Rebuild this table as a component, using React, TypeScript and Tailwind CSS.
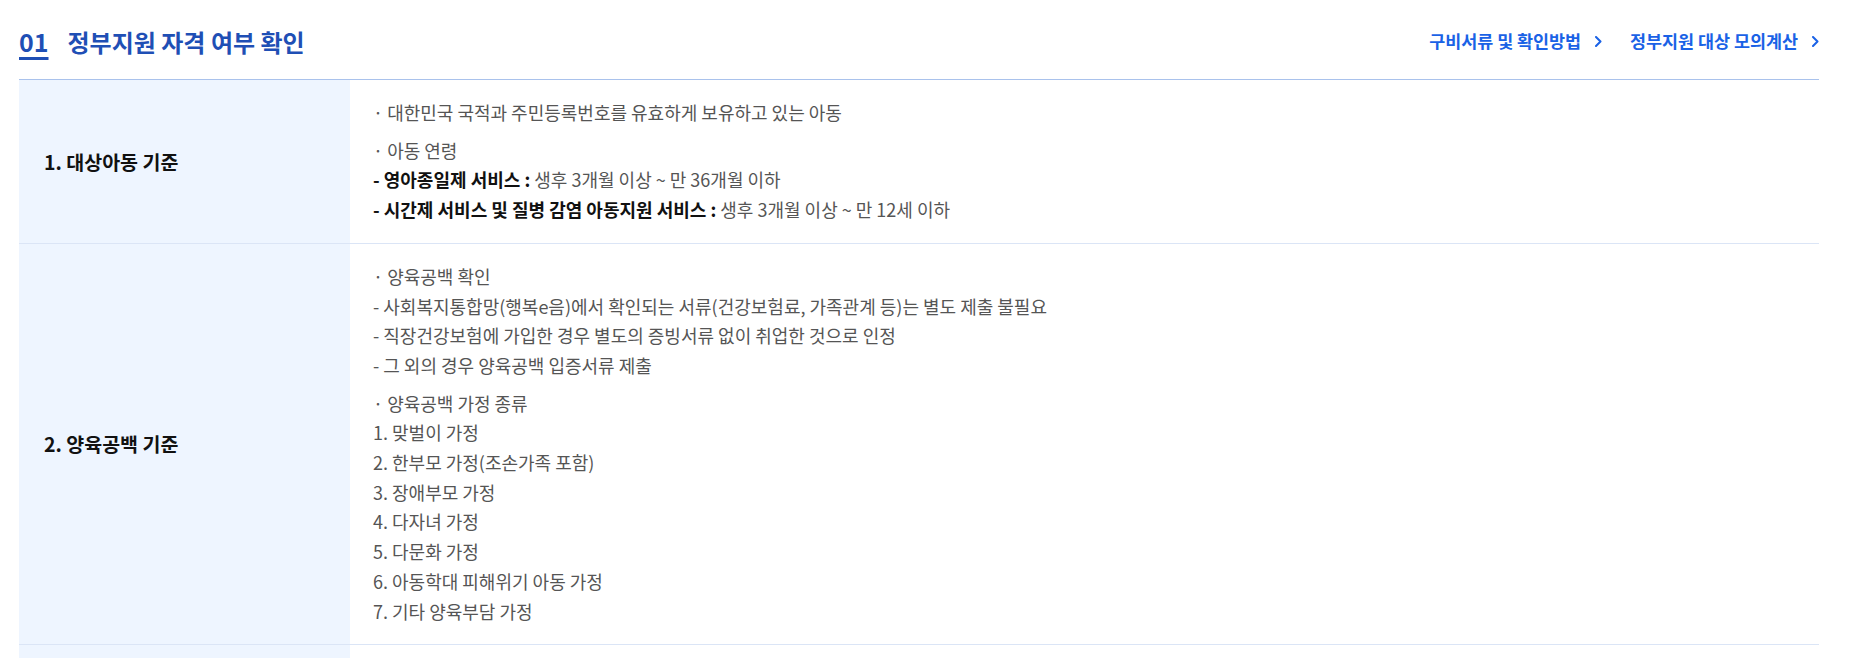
const font = { fontFamily: '"Noto Sans CJK KR", "Noto Sans", sans-serif' }

function Chevron() {
  return (
    <svg width="7" height="11" viewBox="0 0 7 11" fill="none" className="shrink-0">
      <polyline points="1,1 5.5,5.5 1,10" stroke="currentColor" strokeWidth="2" strokeLinecap="round" strokeLinejoin="round" />
    </svg>
  )
}

function Row({ label, children }: { label: string; children: React.ReactNode }) {
  return (
    <div className="flex border-b border-[#dbe5f6]">
      <div className="w-[331px] shrink-0 bg-[#eef5ff] flex items-center pl-[25px]">
        <span className="text-[19.5px] font-bold text-[#111]">{label}</span>
      </div>
      <div className="flex-1 pl-[23px] pt-[18px] pb-[18px] text-[18px] leading-[29.7px] text-[#555]">
        {children}
      </div>
    </div>
  )
}

export default function App() {
  return (
    <div className="min-h-screen bg-white" style={font}>
      <div className="w-[1800px] ml-[19px]">
        {/* Header */}
        <div className="h-[80px] flex items-center justify-between border-b border-[#a9c2ec] pt-[4px]">
          <h2 className="flex items-center gap-[19px] text-[#1f4fb5] font-bold">
            <span className="text-[25px] underline decoration-[3px] underline-offset-[5px]">01</span>
            <span className="text-[24px]">정부지원 자격 여부 확인</span>
          </h2>
          <div className="flex items-center gap-[28px] text-[#1a62e6] text-[17.4px] font-bold">
            <a className="flex items-center gap-[14px]">
              구비서류 및 확인방법
              <Chevron />
            </a>
            <a className="flex items-center gap-[14px]">
              정부지원 대상 모의계산
              <Chevron />
            </a>
          </div>
        </div>

        {/* Table */}
        <Row label="1. 대상아동 기준">
          <p>· 대한민국 국적과 주민등록번호를 유효하게 보유하고 있는 아동</p>
          <div className="mt-[8px]">
            <p>· 아동 연령</p>
            <p>
              <b className="text-[#111]">- 영아종일제 서비스 :</b> 생후 3개월 이상 ~ 만 36개월 이하
            </p>
            <p>
              <b className="text-[#111]">- 시간제 서비스 및 질병 감염 아동지원 서비스 :</b> 생후 3개월 이상 ~ 만 12세 이하
            </p>
          </div>
        </Row>
        <Row label="2. 양육공백 기준">
          <p>· 양육공백 확인</p>
          <p>- 사회복지통합망(행복e음)에서 확인되는 서류(건강보험료, 가족관계 등)는 별도 제출 불필요</p>
          <p>- 직장건강보험에 가입한 경우 별도의 증빙서류 없이 취업한 것으로 인정</p>
          <p>- 그 외의 경우 양육공백 입증서류 제출</p>
          <div className="mt-[8px]">
            <p>· 양육공백 가정 종류</p>
            <p>1. 맞벌이 가정</p>
            <p>2. 한부모 가정(조손가족 포함)</p>
            <p>3. 장애부모 가정</p>
            <p>4. 다자녀 가정</p>
            <p>5. 다문화 가정</p>
            <p>6. 아동학대 피해위기 아동 가정</p>
            <p>7. 기타 양육부담 가정</p>
          </div>
        </Row>
        <div className="flex h-[60px]">
          <div className="w-[331px] shrink-0 bg-[#eef5ff]" />
          <div className="flex-1" />
        </div>
      </div>
    </div>
  )
}
